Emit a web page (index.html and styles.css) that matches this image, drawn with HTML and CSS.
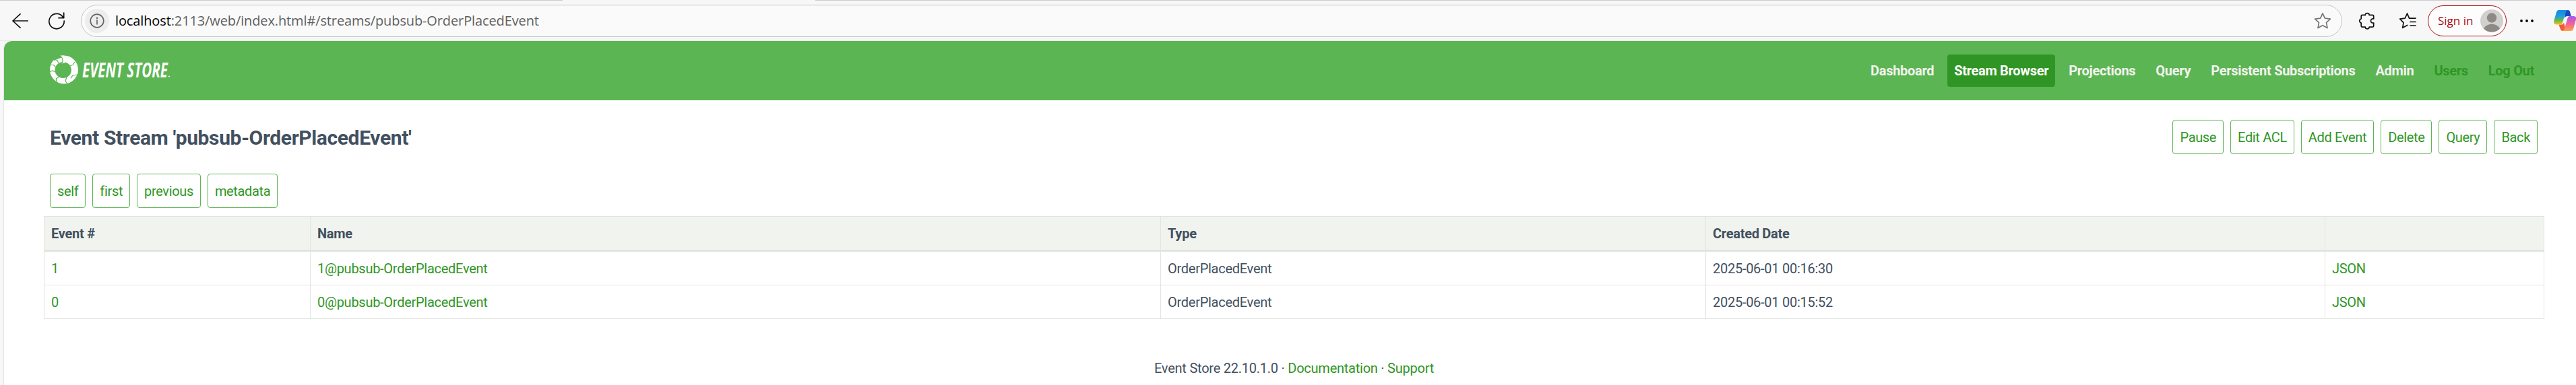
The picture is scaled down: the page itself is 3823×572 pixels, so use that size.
FILE: index.html
```html
<!DOCTYPE html>
<html lang="en">
<head>
<meta charset="utf-8">
<title>Event Store</title>
<link rel="stylesheet" href="styles.css">
</head>
<body>
<div class="toolbar">
  <svg class="icon back" width="24" height="22" viewBox="0 0 24 22"><path d="M23.5 11H1M12 .8L1 11l11 10.200"/></svg>
  <svg class="icon reload" width="26" height="26" viewBox="0 0 26 26"><path d="M23 8.500A11.200 11.200 0 1 0 24.200 13M23.700 1v7.700H16"/></svg>
  <div class="address">
    <span class="info"><svg class="icon" width="22" height="22" viewBox="0 0 22 22"><circle cx="11" cy="11" r="9.800"/><path d="M11 9.800v6"/><circle class="dot" cx="11" cy="6.800" r="1.300"/></svg></span>
    <span class="url"><b>localhost</b>:2113/web/index.html#/streams/pubsub-OrderPlacedEvent</span>
    <svg class="icon star" width="26" height="26" viewBox="0 0 26 26"><path d="M13 1.800l3.400 7.300 8 1-5.900 5.500 1.500 8L13 19.700l-7 3.900 1.500-8L1.600 10.100l8-1z"/></svg>
  </div>
  <svg class="icon puzzle" width="24" height="26" viewBox="0 0 24 26"><path d="M4.500 4.400H9.200C9.200.6 15.200.6 15.200 4.400H20.200q1.500 0 1.500 1.500V10C16 8.800 16 17.200 21.700 16V20.600q0 1.500-1.500 1.500H15.200c0 3.800-6 3.800-6 0H4.500q-1.300 0-1.300-1.500V16.200C0 15.600 0 10.400 3.200 9.800V5.900q0-1.500 1.300-1.500z"/></svg>
  <span class="separator"></span>
  <svg class="icon favorites" width="26" height="26" viewBox="0 0 26 26"><path d="M15.500 9.100L12.500 2 9.200 9.100 1.700 10.200 7 15.600 5.700 23.300l7-3.800M15.500 9.100H25M17 14.500h8M17 20h8"/></svg>
  <div class="signin"><span>Sign in</span>
    <svg width="34" height="34" viewBox="0 0 34 34"><circle cx="17" cy="17" r="17" fill="#d2d0ce"/><circle cx="17" cy="12.500" r="7.200" fill="#8d8985"/><path d="M5 28.500c5-9 19-9 24 0a17 17 0 0 1-24 0z" fill="#8d8985"/></svg>
  </div>
  <svg class="more" width="20" height="6" viewBox="0 0 20 6"><circle cx="2" cy="3" r="1.900"/><circle cx="10" cy="3" r="1.900"/><circle cx="18" cy="3" r="1.900"/></svg>
  <svg class="copilot" width="33" height="32" viewBox="0 0 33 32">
    <defs>
      <linearGradient id="cool" x1="0" y1="0" x2="0" y2="1"><stop offset="0" stop-color="#1488e8"/><stop offset=".4" stop-color="#1e9edb"/><stop offset=".7" stop-color="#5fb65a"/><stop offset="1" stop-color="#ffc400"/></linearGradient>
      <linearGradient id="warm" x1="0" y1="0" x2="0" y2="1"><stop offset="0" stop-color="#a45af0"/><stop offset=".5" stop-color="#f0609c"/><stop offset="1" stop-color="#ffa04c"/></linearGradient>
    </defs>
    <path d="M17 0h4q2.500 0 3.200 3l1.600 6h-5.500q-3 0-4.200 3z" fill="#1a48c8"/>
    <path d="M12 31q-2-1-3-5l-1.500-4.500H12q2 0 3-3L18 30z" fill="#f45a34"/>
    <path d="M7.500 0H21q-2.500.5-3.500 4l-4.500 14.500q-.8 3-3.500 3H4q-5 0-3.600-6L4 3Q5 0 7.500 0z" fill="url(#cool)"/>
    <path d="M12 31q3-.3 4-4l4.500-15q1-3 3.500-3h5.300q5 0 3.700 5l-4 14q-1 3-4 3z" fill="url(#warm)"/>
  </svg>
</div>
<div class="page">
  <header class="header">
    <svg class="logo" width="182" height="46" viewBox="0 0 182 46">
      <path class="ring" fill-rule="evenodd" d="M22 .5a21 21 0 1 1 0 42 21 21 0 1 1 0-42zM20.700 10a12.200 12 0 1 0 0 24 12.200 12 0 1 0 0-24z"/>
      <path class="notch" d="M5 0H16.500L20 4 12 6 7 8z"/>
      <path class="ring" d="M16 .6L22 .5 24 11 18.500 12.500Q22 6 16 .6zM10 7L17.500 3.800 20 6 18.500 9 13 11z"/>
      <path class="cuts" d="M31 15.500l4-1 3-4.500M42 29l-7 1-3 4.500M27 43l-3-5 2-5M10.500 40v-5l4-3M0 25l5-2 4 2M2 14.500h4.500l3 3M8 6l4 2 2 4M16.500.6Q22 6 19 12"/>
      <text class="wordmark" x="49" y="33" textLength="127" lengthAdjust="spacingAndGlyphs">EVENT STORE</text>
      <circle class="reg" cx="178" cy="31.500" r="1"/>
    </svg>
    <nav class="nav">
      <a>Dashboard</a><a class="active">Stream Browser</a><a>Projections</a><a>Query</a><a>Persistent Subscriptions</a><a>Admin</a><a class="muted">Users</a><a class="muted">Log Out</a>
    </nav>
  </header>
  <main class="content">
    <div class="title-row">
      <h1>Event Stream 'pubsub-OrderPlacedEvent'</h1>
      <div class="buttons"><a>Pause</a><a>Edit ACL</a><a>Add Event</a><a>Delete</a><a>Query</a><a>Back</a></div>
    </div>
    <div class="buttons paging"><a>self</a><a>first</a><a>previous</a><a>metadata</a></div>
    <table class="events">
      <colgroup><col class="c-num"><col class="c-name"><col class="c-type"><col class="c-date"><col class="c-json"></colgroup>
      <thead><tr><th>Event #</th><th>Name</th><th>Type</th><th>Created Date</th><th></th></tr></thead>
      <tbody>
        <tr><td><a>1</a></td><td><a>1@pubsub-OrderPlacedEvent</a></td><td>OrderPlacedEvent</td><td>2025-06-01 00:16:30</td><td><a>JSON</a></td></tr>
        <tr><td><a>0</a></td><td><a>0@pubsub-OrderPlacedEvent</a></td><td>OrderPlacedEvent</td><td>2025-06-01 00:15:52</td><td><a>JSON</a></td></tr>
      </tbody>
    </table>
    <footer class="footer">Event Store 22.10.1.0 · <a>Documentation</a> · <a>Support</a></footer>
  </main>
</div>
</body>
</html>
```
FILE: styles.css
```css
* { box-sizing: border-box; }
body {
  margin: 0;
  height: 572px;
  overflow: hidden;
  display: flex;
  flex-direction: column;
  background: #f7f7f7;
  font: 20px/30px Roboto, sans-serif;
  letter-spacing: -.27px;
  color: #42505f;
}
svg { display: block; flex: none; }
.icon { fill: none; stroke: #111; stroke-width: 1.7; stroke-linejoin: round; stroke-linecap: round; }

.toolbar {
  height: 61px;
  flex: none;
  display: flex;
  align-items: center;
  padding: 2px 0 0 18px;
  /* strip edge, open under the active tab */
  background: linear-gradient(90deg, #ccc 835px, transparent 835px 1210px, #ccc 1210px) top / 100% 1px no-repeat;
  border-bottom: 1px solid #e9e9e9;
  font-family: "Open Sans", sans-serif;
}
.reload { margin-left: 29px; }
.address {
  width: 3356px;
  height: 48px;
  margin-left: 23px;
  flex: none;
  display: flex;
  align-items: center;
  padding: 0 15px 0 5px;
  border: 1px solid #c6c6c6;
  border-radius: 24px;
  background: #fafafa;
}
.info { width: 36px; height: 36px; border-radius: 50%; background: #ededed; display: grid; place-items: center; }
.info .icon { stroke: #666; }
.info .dot { fill: #666; stroke: none; }
.url { margin-left: 9px; color: #5f5f5f; white-space: nowrap; letter-spacing: -.12px; }
.url b { font-weight: 400; color: #000; }
.star { margin-left: auto; stroke: #767676; }
.puzzle { margin-left: 25px; }
.separator { width: 2px; height: 24px; margin-left: 18px; background: #ccc; }
.favorites { margin-left: 17px; }
.signin {
  width: 117px;
  height: 46px;
  margin-left: 17px;
  flex: none;
  display: flex;
  align-items: center;
  justify-content: space-between;
  padding: 0 4px 0 14px;
  border: 1px solid #a80d10;
  border-radius: 23px;
  background: #fdfdfd;
  color: #a80d10;
  font-size: 17px;
  letter-spacing: 0;
  white-space: nowrap;
}
.more { margin-left: 20px; }
.copilot { margin-left: 30px; }

.page {
  flex: 1;
  margin-left: 6px;
  border-radius: 12px 0 0 0;
  overflow: hidden;
  background: #fff;
  box-shadow: -1px 0 0 #e4e4e4;
}
.header {
  height: 88px;
  display: flex;
  align-items: center;
  justify-content: space-between;
  padding: 0 52px 0 67px;
  background: #5cb553;
}
.logo { overflow: visible; }
.ring, .reg { fill: #fff; }
.notch { fill: #5cb553; }
.cuts { fill: none; stroke: #5cb553; stroke-width: 1.2; }
.wordmark { font: italic 700 30px "Open Sans", sans-serif; letter-spacing: 0; fill: #fff; }
.nav { display: flex; gap: 10px; letter-spacing: -.3px; }
.nav a { padding: 9px 10px; border-radius: 4px; color: #f1f3ee; font-weight: 700; }
.nav .active { background: #2f9625; color: #fff; }
.nav .muted { color: #2f9625; }

.content { padding: 29px 47px 0 59px; }
.title-row { display: flex; justify-content: space-between; align-items: center; padding: 0 10px 0 9px; }
h1 { margin: 2px 0 0; font-size: 30px; line-height: 42px; letter-spacing: -.36px; }
.buttons { display: flex; gap: 10px; letter-spacing: -.35px; }
.buttons a { height: 51px; padding: 10px 10px 9px; border: 1px solid #5cb553; border-radius: 4px; background: #fff; }
a { color: #2f9625; }
.paging { margin: 29px 0 12px 9px; }

.events {
  width: 3711px;
  table-layout: fixed;
  border-spacing: 0;
  border-top: 1px solid #e1e4df;
  border-right: 1px solid #e1e4df;
}
.c-num { width: 395px; }
.c-name { width: 1262px; }
.c-type { width: 809px; }
.c-date { width: 919px; }
th, td { padding: 10px 10px 9px; text-align: left; border-left: 1px solid #e1e4df; border-bottom: 1px solid #e1e4df; }
th { height: 52px; background: #f1f3ee; border-bottom-width: 3px; }
td { height: 50px; }
.footer { margin-top: 58px; text-align: center; letter-spacing: -.24px; }
```
